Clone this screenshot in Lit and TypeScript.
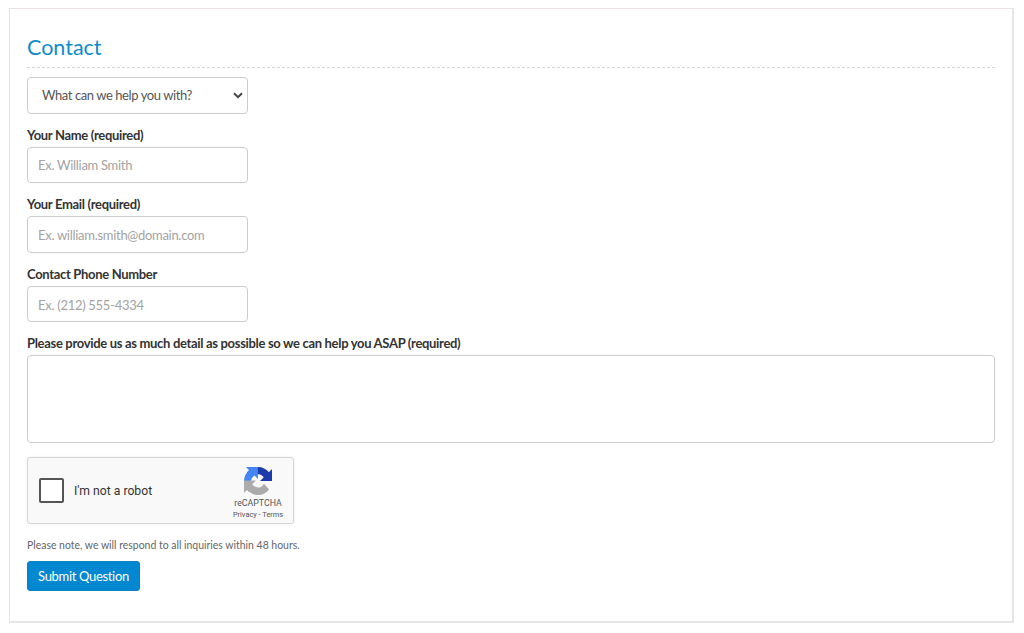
import { LitElement, html, css, svg } from "lit";
import { customElement } from "lit/decorators.js";

@customElement("app-root")
export class AppRoot extends LitElement {
  static styles = css`
    :host { display: block; font-family: Lato, "Liberation Sans", sans-serif; color: #333; background: #fff; }
    * { box-sizing: border-box; }
    .card {
      margin: 8px 10px 0 9px; height: 615px; padding: 25px 17px 0 17px;
      border: 1px solid #e6e6e6; border-top-color: #ecdfe4; border-bottom: 2px solid #e6e6e6; border-right: 2px solid #e6e6e6;
    }
    h1 { margin: 0; font-size: 21.5px; font-weight: 400; line-height: 26px; color: #0e8ccd; padding-bottom: 7px; border-bottom: 1px dashed #d6d6d6; }
    .field { display: block; width: 221px; height: 36.6px; border: 1px solid #ccc; border-radius: 4px; background: #fff; font: 13px Lato, sans-serif; letter-spacing: -.29px; }
    .sel { margin-top: 9px; padding: 0 4px 0 14px; display: flex; align-items: center; justify-content: space-between; color: #555; letter-spacing: -.42px; }
    .sel svg { display: block; }
    label { display: block; font-size: 13px; letter-spacing: -.32px; font-weight: 700; line-height: 16px; color: #333; margin: 13px 0 4px; }
    input.field { padding: 1px 10px 0; color: #555; }
    input.field::placeholder { color: #a3a3a3; opacity: 1; }
    textarea { display: block; width: 100%; height: 88px; border: 1px solid #ccc; border-radius: 4px; resize: none; background: #fff; }
    .robot {
      margin-top: 13.4px; width: 267px; height: 67px; background: #f9f9f9; border: 1px solid #d6d6d6; border-radius: 3px;
      box-shadow: 0 0 3px rgba(0,0,0,.08); display: flex; align-items: center; padding: 0 11px; font-family: Roboto, sans-serif;
    }
    .box { width: 25px; height: 25px; border: 2px solid #555; border-radius: 2px; background: #fff; }
    .txt { margin-left: 10px; font-size: 12.2px; color: #333; flex: 1; padding-top: 1px; }
    .logo { display: flex; flex-direction: column; align-items: center; width: 50px; margin: 6px -1px 0 0; color: #555; }
    .logo svg { display: block; margin-bottom: 2px; }
    .brand { font-size: 8.8px; line-height: 12px; }
    .links { font-size: 7.4px; line-height: 10px; white-space: nowrap; margin-top: 1px; }
    .note { margin: 15px 0 9px; font-size: 10.45px; line-height: 13px; color: #666; }
    button { display: block; width: 113px; height: 30px; border: 1px solid #0b7fc0; border-radius: 3px; background: #0288d1; color: #fff; font: 13px Lato, sans-serif; letter-spacing: -.33px; padding: 0; }
  `;

  render() {
    return html`<div class="card">
      <h1>Contact</h1>
      <div class="field sel">
        <span>What can we help you with?</span>
        <svg width="10" height="7" viewBox="0 0 10 7"><path d="M1 1.2 L5 5.2 L9 1.2" fill="none" stroke="#444" stroke-width="2"/></svg>
      </div>
      <label>Your Name (required)</label>
      <input class="field" placeholder="Ex. William Smith" />
      <label>Your Email (required)</label>
      <input class="field" placeholder="Ex. william.smith@domain.com" />
      <label>Contact Phone Number</label>
      <input class="field" placeholder="Ex. (212) 555-4334" />
      <label>Please provide us as much detail as possible so we can help you ASAP (required)</label>
      <textarea></textarea>
      <div class="robot">
        <div class="box"></div>
        <div class="txt">I'm not a robot</div>
        <div class="logo">
          ${svg`<svg width="28" height="28" viewBox="0 0 64 64">
            <path d="M64 31.955l-.033-1.37V4.687l-7.16 7.16C50.948 4.674 42.033.093 32.05.093c-10.4 0-19.622 4.96-25.458 12.64l11.736 11.86a15.55 15.55 0 0 1 4.754-5.334c2.05-1.6 4.952-2.906 8.968-2.906.485 0 .86.07 1.217.21 4.976.393 9.29 3.14 11.83 7.124l-8.31 8.308c10.525-.04 22.415-.065 32.004-.14" fill="#1c3aa9"/>
            <path d="M31.862.094l-1.37.033H4.594l7.16 7.16C4.58 13.147 0 22.06 0 32.046c0 10.4 4.96 19.622 12.64 25.458l11.86-11.736a15.55 15.55 0 0 1-5.334-4.754c-1.6-2.05-2.906-4.952-2.906-8.968 0-.485.07-.86.21-1.217.393-4.976 3.14-9.29 7.124-11.83l8.308 8.31c-.04-10.525-.065-22.415-.14-32.004" fill="#4285f4"/>
            <path d="M.001 32.045l.033 1.37v25.898l7.16-7.16c5.86 7.173 14.774 11.754 24.76 11.754 10.4 0 19.622-4.96 25.458-12.64L45.676 38.407a15.55 15.55 0 0 1-4.754 5.334c-2.05 1.6-4.952 2.906-8.968 2.906-.485 0-.86-.07-1.217-.21-4.976-.393-9.29-3.14-11.83-7.124l8.31-8.308c-10.525.04-22.415.065-32.004.14" fill="#ababab"/>
          </svg>`}
          <div class="brand">reCAPTCHA</div>
          <div class="links">Privacy - Terms</div>
        </div>
      </div>
      <div class="note">Please note, we will respond to all inquiries within 48 hours.</div>
      <button>Submit Question</button>
    </div>`;
  }
}
